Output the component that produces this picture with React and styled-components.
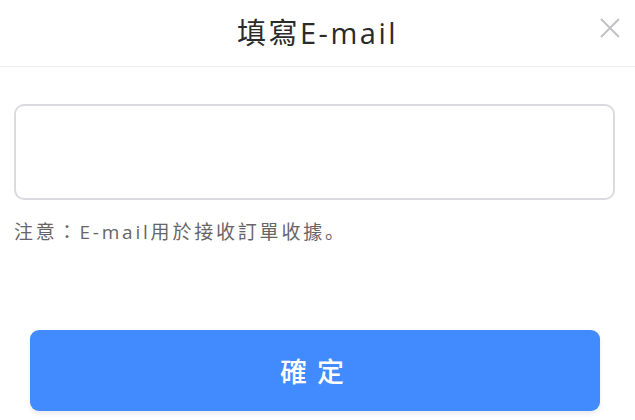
import React from "react";
import styled, { createGlobalStyle } from "styled-components";

const Global = createGlobalStyle`
  html, body {
    margin: 0;
    padding: 0;
    background: #ffffff;
    font-family: "Open Sans", "Noto Sans CJK TC", sans-serif;
  }
  * { box-sizing: border-box; }
`;

const Sheet = styled.div`
  width: 635px;
  height: 420px;
  display: flex;
  flex-direction: column;
  background: #fff;
`;

const Header = styled.header`
  height: 67px;
  display: grid;
  grid-template-columns: 1fr auto 1fr;
  align-items: center;
  border-bottom: 1px solid #eceef2;
`;

const Title = styled.h1`
  grid-column: 2;
  margin: 0 0 2px;
  font-size: 29px;
  font-weight: 400;
  color: #2b2b2b;
  line-height: 1;
  letter-spacing: 2.5px;
`;

const CloseButton = styled.button`
  grid-column: 3;
  justify-self: end;
  margin-right: 14px;
  margin-bottom: 10px;
  width: 22px;
  height: 22px;
  padding: 0;
  border: none;
  background: none;
  display: flex;
  align-items: center;
  justify-content: center;
  cursor: pointer;
`;

const Body = styled.div`
  padding: 37px 20px 0 14px;
  display: flex;
  flex-direction: column;
`;

const EmailInput = styled.input`
  width: 601px;
  height: 96px;
  border: 2px solid #dadbe0;
  border-radius: 10px;
  padding: 0 16px;
  font-size: 20px;
  font-family: inherit;
  outline: none;
  color: #333;
`;

const Note = styled.p`
  margin: 19px 0 0;
  font-size: 19px;
  line-height: 24px;
  color: #666;
  letter-spacing: 2.8px;
`;

/* full stop set low-left, as in the JP face */
const Stop = styled.span`
  font-family: "Noto Sans CJK JP", sans-serif;
`;

const Footer = styled.div`
  margin-top: auto;
  padding: 0 35px 9px 30px;
`;

const Confirm = styled.button`
  width: 570px;
  height: 81px;
  border: none;
  border-radius: 9px;
  background: #418bfe;
  color: #fff;
  font-family: inherit;
  font-size: 27px;
  font-weight: 500;
  letter-spacing: 10px;
  padding-left: 10px;
  box-shadow: 0 3px 5px rgba(0, 0, 0, 0.08);
  cursor: pointer;
`;

const CloseIcon = () => (
  <svg width="20" height="20" viewBox="0 0 20 20" fill="none">
    <path d="M1 1L19 19M19 1L1 19" stroke="#c0c0c4" strokeWidth="1.8" />
  </svg>
);

export default function App() {
  return (
    <>
      <Global />
      <Sheet>
        <Header>
          <Title>填寫E-mail</Title>
          <CloseButton aria-label="關閉">
            <CloseIcon />
          </CloseButton>
        </Header>
        <Body>
          <EmailInput type="email" />
          <Note>
            注意：E-mail用於接收訂單收據<Stop>。</Stop>
          </Note>
        </Body>
        <Footer>
          <Confirm>確定</Confirm>
        </Footer>
      </Sheet>
    </>
  );
}
